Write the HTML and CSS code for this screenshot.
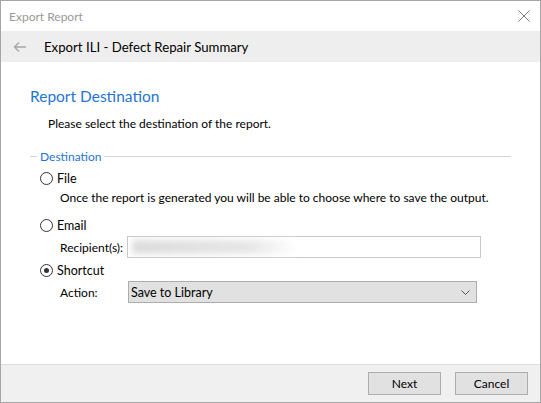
FILE: index.html
```html
<!DOCTYPE html>
<html lang="en">
<head>
  <meta charset="UTF-8">
  <title>Export Report</title>
  <link rel="stylesheet" href="styles.css">
</head>
<body>
  <div class="window">

    <!-- title bar -->
    <div class="titlebar">
      <span class="title">Export Report</span>
      <svg class="close" width="12" height="12" viewBox="0 0 12 12">
        <path d="M0.5 0.5 L11.5 11.5 M11.5 0.5 L0.5 11.5" stroke="#7a7a7a" stroke-width="1" fill="none"/>
      </svg>
    </div>

    <!-- wizard header -->
    <div class="header">
      <svg class="back" width="14" height="12" viewBox="0 0 14 12">
        <path d="M13 6 H1.5 M6 1.5 L1.5 6 L6 10.5" stroke="#a8a8a8" stroke-width="1.4" fill="none"/>
      </svg>
      <span class="header-text">Export ILI - Defect Repair Summary</span>
    </div>

    <div class="content">
      <h2 class="page-title">Report Destination</h2>
      <p class="page-desc">Please select the destination of the report.</p>

      <div class="group">
        <div class="group-head">
          <span class="group-line short"></span>
          <span class="group-label">Destination</span>
          <span class="group-line"></span>
        </div>

        <div class="option">
          <span class="radio"></span>
          <span>File</span>
        </div>
        <div class="indent note">Once the report is generated you will be able to choose where to save the output.</div>

        <div class="option email">
          <span class="radio"></span>
          <span>Email</span>
        </div>
        <div class="indent field">
          <span class="field-label">Recipient(s):</span>
          <div class="textbox"><span class="hidden-text"></span></div>
        </div>

        <div class="option shortcut">
          <span class="radio checked"></span>
          <span>Shortcut</span>
        </div>
        <div class="indent field">
          <span class="field-label">Action:</span>
          <div class="combo">
            <span>Save to Library</span>
            <svg width="9" height="5" viewBox="0 0 9 5">
              <path d="M0.5 0.5 L4.5 4.5 L8.5 0.5" stroke="#555" stroke-width="1" fill="none"/>
            </svg>
          </div>
        </div>
      </div>
    </div>

    <div class="footer">
      <button class="btn">Next</button>
      <button class="btn">Cancel</button>
    </div>

  </div>
</body>
</html>
```

FILE: styles.css
```css
body {
  margin: 0;
  font-family: Lato, "Noto Sans", sans-serif;
  font-size: 12px;
  color: #000;
}

.window {
  width: 541px;
  height: 403px;
  box-sizing: border-box;
  border: 1px solid #a6a6a6;
  display: flex;
  flex-direction: column;
  background: #fff;
  white-space: nowrap;
}

.titlebar {
  height: 30px;
  display: flex;
  align-items: center;
  justify-content: space-between;
  padding: 0 10px 0 8px;
}

.title {
  color: #999;
  font-size: 12px;
}

.header {
  height: 31px;
  background: #eeeeee;
  display: flex;
  align-items: center;
  padding-left: 12px;
}

.back {
  margin-right: 17px;
}

.header-text {
  font-size: 13.2px;
}

.content {
  flex: 1;
  padding-left: 29px;
}

.page-title {
  margin: 24px 0 0;
  font-size: 15.5px;
  font-weight: normal;
  line-height: 20px;
  color: #1f74d4;
}

.page-desc {
  margin: 10px 0 0 18px;
  line-height: 16px;
}

.group {
  margin-top: 16px;
  width: 481px;
}

.group-head {
  display: flex;
  align-items: center;
  height: 16px;
}

.group-line {
  flex: 1;
  height: 1px;
  background: #d5d5d5;
}

.group-line.short {
  flex: none;
  width: 7px;
}

.group-label {
  color: #1f74d4;
  padding: 0 3px;
}

.option {
  display: flex;
  align-items: center;
  height: 16px;
  margin-top: 6px;
  padding-left: 10px;
  font-size: 12.5px;
}

.option.email {
  margin-top: 11px;
}

.option.shortcut {
  margin-top: 4px;
}

.radio {
  width: 11px;
  height: 11px;
  border: 1px solid #333;
  border-radius: 50%;
  margin-right: 4px;
  position: relative;
}

.radio.checked::after {
  content: "";
  position: absolute;
  left: 3px;
  top: 3px;
  width: 5px;
  height: 5px;
  border-radius: 50%;
  background: #333;
}

.indent {
  padding-left: 30px;
}

.note {
  margin-top: 4px;
  line-height: 16px;
}

.field {
  display: flex;
  align-items: center;
  height: 22px;
  margin-top: 3px;
}

.field-label {
  width: 67px;
}

.textbox {
  width: 348px;
  height: 20px;
  border: 1px solid #c8c8c8;
  display: flex;
  align-items: center;
  padding-left: 4px;
}

.hidden-text {
  width: 165px;
  height: 14px;
  background: linear-gradient(to right, #dcdcdc, #e6e6e6 70%, #fff);
  filter: blur(3px);
}

.combo {
  width: 339px;
  height: 20px;
  margin-left: 1px;
  border: 1px solid #adadad;
  background: #e1e1e1;
  display: flex;
  align-items: center;
  justify-content: space-between;
  padding: 0 6px 0 2px;
  font-size: 12.5px;
}

.footer {
  height: 38px;
  border-top: 1px solid #dfdfdf;
  background: #f0f0f0;
  display: flex;
  justify-content: flex-end;
  align-items: flex-start;
  padding: 7px 12px 0 0;
  box-sizing: border-box;
  gap: 14px;
}

.btn {
  width: 73px;
  height: 23px;
  border: 1px solid #adadad;
  background: #e1e1e1;
  font-family: Lato, "Noto Sans", sans-serif;
  font-size: 12px;
  color: #000;
  padding: 0;
}
```
